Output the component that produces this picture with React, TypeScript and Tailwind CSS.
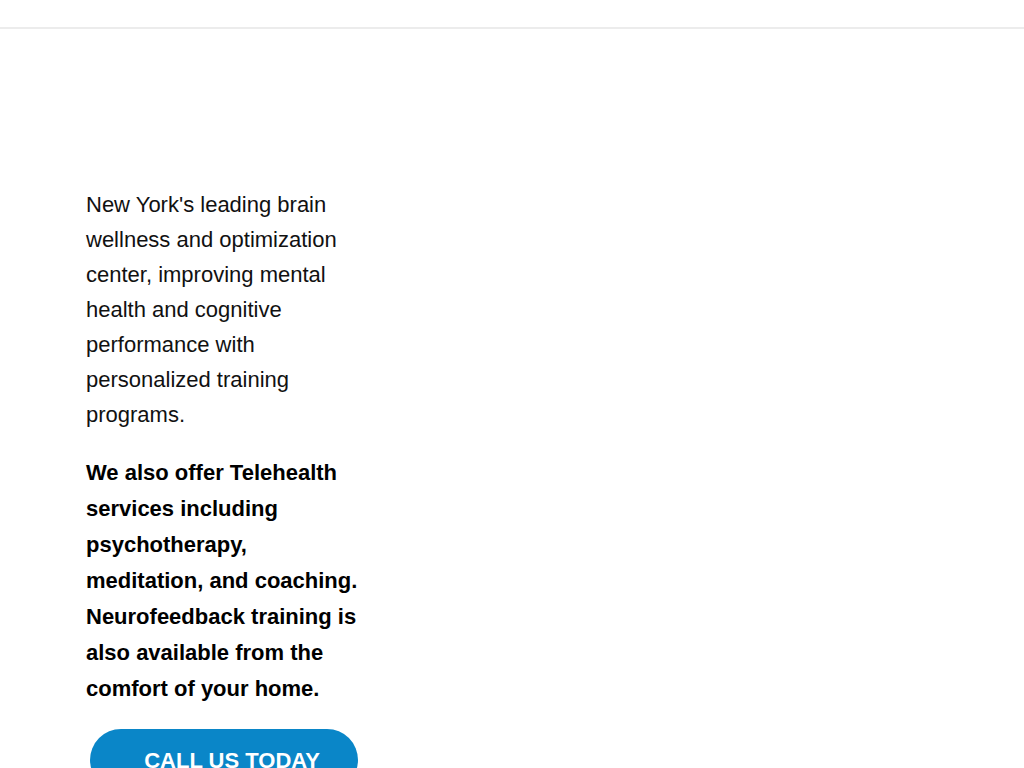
export default function App() {
  return (
    <div className="min-h-screen bg-white" style={{ fontFamily: '"Liberation Sans", Arial, sans-serif' }}>
      <header className="h-[29px] border-b-2 border-[#ececec] bg-white" />
      <main className="pl-[86px] pt-[158px]">
        <div className="w-[276px]">
          <p className="text-[22px] leading-[35px] text-[#111]">
            New York's leading brain wellness and optimization center, improving mental health and cognitive performance with personalized training programs.
          </p>
          <p className="mt-[23px] text-[22px] leading-[36px] font-bold text-black">
            We also offer Telehealth services including psychotherapy, meditation, and coaching. Neurofeedback training is also available from the comfort of your home.
          </p>
          <div className="mt-[22px] pl-[4px]">
            <a className="flex h-[62px] w-[268px] items-center justify-center rounded-full bg-[#0a86c8] pl-[16px] text-[22px] font-bold text-white">
              CALL US TODAY
            </a>
          </div>
        </div>
      </main>
    </div>
  );
}
